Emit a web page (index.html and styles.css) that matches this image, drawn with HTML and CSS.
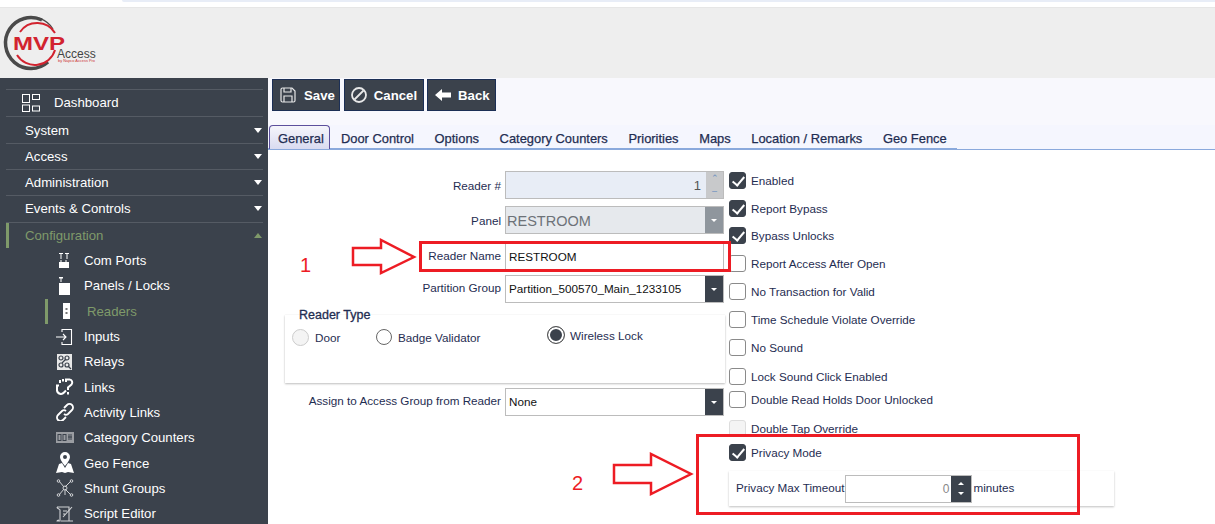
FILE: index.html
```html
<!DOCTYPE html>
<html lang="en">
<head>
<meta charset="utf-8">
<title>MVP Access - Reader</title>
<link rel="stylesheet" href="styles.css">
</head>
<body>
<div class="topbar"><div class="toppill"></div></div>
<header class="brand">
  <svg class="logo" width="100" height="70" viewBox="0 8 100 70">
    <path d="M42 20 A25.500 25.500 0 1 0 48 62" fill="none" stroke="#4a4a4a" stroke-width="3.500"/>
    <path d="M24 18 A26 26 0 0 1 53 29" fill="none" stroke="#4a4a4a" stroke-width="1.300"/>
    <path d="M20 32 A21 21 0 0 1 55 33" fill="none" stroke="#d2232f" stroke-width="2"/>
    <path d="M55 50 A21 21 0 0 1 17 55" fill="none" stroke="#d2232f" stroke-width="2"/>
    <text x="13" y="50" class="logo-mvp" textLength="52" lengthAdjust="spacingAndGlyphs">MVP</text>
    <text x="57" y="58" class="logo-access">Access</text>
    <text x="58" y="62" class="logo-by" textLength="37" lengthAdjust="spacingAndGlyphs">by Napco Access Pro</text>
  </svg>
</header>
<div class="layout">
  <nav class="sidebar">
    <a class="dash">
      <svg class="ico dash-ico" viewBox="0 0 18 18" fill="none" stroke="#fff" stroke-width="1"><rect x=".5" y=".5" width="7" height="8"/><rect x="10.5" y=".5" width="7" height="5"/><rect x=".5" y="11" width="7" height="6.500"/><rect x="10.500" y="12" width="7" height="5"/></svg>
      <span>Dashboard</span>
    </a>
    <a class="sec sec-tall">System<i class="caret"></i></a>
    <a class="sec">Access<i class="caret"></i></a>
    <a class="sec">Administration<i class="caret"></i></a>
    <a class="sec sec-tall sec-lift">Events &amp; Controls<i class="caret"></i></a>
    <a class="sec open">Configuration<i class="caret up"></i></a>
    <ul class="sub">
      <li><svg class="ico" viewBox="0 0 18 18" fill="#fff"><path d="M3 1h4v1H5.500v5h-1V2H3zM9 1h4v1h-1.500v5h-1V2H9z"/><path d="M3 10h1.500V8h1v2h4V8h1v2H13v6H3z"/></svg>Com Ports</li>
      <li><svg class="ico" viewBox="0 0 18 18" fill="#fff"><path d="M3 0h4v1.500H5.500V5h-1V1.500H3z"/><rect x="3" y="6" width="11" height="12"/></svg>Panels / Locks</li>
      <li class="active"><svg class="ico" viewBox="0 0 18 18"><rect x="5" y="1" width="7" height="16" fill="#fff"/><rect x="7.500" y="6" width="2" height="2" fill="#777"/><rect x="7.500" y="10" width="2" height="2" fill="#777"/></svg>Readers</li>
      <li><svg class="ico" viewBox="0 0 18 18" fill="none" stroke="#fff" stroke-width="1.100"><path d="M6 4V1.500h9.500v15H6V14"/><path d="M0 9h10M7 6l3 3-3 3"/></svg>Inputs</li>
      <li><svg class="ico" viewBox="0 0 18 18"><rect x="1" y="1" width="15" height="16" fill="#e8e8e8"/><g fill="none" stroke="#3b424c" stroke-width="1.200"><circle cx="5" cy="5" r="2"/><circle cx="11" cy="5" r="2"/><circle cx="5" cy="12" r="2"/><circle cx="11" cy="12" r="2"/><path d="M6 10l4-4M12 13l3 3"/></g></svg>Relays</li>
      <li><svg class="ico" viewBox="0 0 18 18" fill="none" stroke="#fff" stroke-width="2"><path d="M10 4V1.500h3.500a3 3 0 0 1 2 5L12 9.500V12M12 14v2.500M3 7.500H1v5a4 4 0 0 0 7 2l2-2M4 2v3M7 1v2.500"/></svg>Links</li>
      <li><svg class="ico" viewBox="0 0 18 18" fill="none" stroke="#fff" stroke-width="1.800"><path d="M8 5l3-3a3 3 0 0 1 5 5l-4 4a3 3 0 0 1-4 0"/><path d="M10 8a3 3 0 0 0-4 0l-4 4a3 3 0 0 0 5 5l3-3"/></svg>Activity Links</li>
      <li><svg class="ico" viewBox="0 0 18 18"><rect x="0" y="3" width="18" height="11" fill="#9a9da2"/><g fill="none" stroke="#3b424c" stroke-width="1"><rect x="2" y="5.500" width="3" height="6"/><rect x="7" y="5.500" width="3" height="6"/><path d="M12 8h4M13 5v6M15 5v6"/></g></svg>Category Counters</li>
      <li><svg class="ico ico-geo" viewBox="0 0 18 22" fill="#fff"><path fill-rule="evenodd" d="M9 0a5 5 0 0 1 5 5c0 3-5 9-5 9S4 8 4 5a5 5 0 0 1 5-5zm0 3a2 2 0 1 0 0 4 2 2 0 0 0 0-4z"/><path d="M3 12l3-1 3 5 3-5 3 1 3 9-6-1-3 1-3-1-6 1z"/></svg>Geo Fence</li>
      <li><svg class="ico" viewBox="0 0 18 18" fill="none" stroke="#cfd1d4" stroke-width="1"><path d="M3 2l5 6M15 2l-6 6M3 16l5-6M15 16l-6-6M9 11v5"/><circle cx="9" cy="9" r="2"/><circle cx="2.500" cy="2" r="1.300"/><circle cx="15.500" cy="2" r="1.300"/><circle cx="2.500" cy="16" r="1.300"/><circle cx="15.500" cy="16" r="1.300"/></svg>Shunt Groups</li>
      <li><svg class="ico" viewBox="0 0 18 18" fill="none" stroke="#cfd1d4" stroke-width="1.100"><path d="M1 2h12v14H5M1 2c0 2 3 2 3 3v11H1c0-1 1-1 2-1M13 16h4"/><path d="M7 12l9-10M7 6h4M7 9h2"/></svg>Script Editor</li>
    </ul>
  </nav>
  <main class="main">
    <div class="toolbar">
      <button class="btn btn-save"><svg class="btn-ico" viewBox="0 0 16 16" fill="none" stroke="#e8e8e8" stroke-width="1.200"><path d="M1 2.500A1.500 1.500 0 0 1 2.500 1H12l3 3v9.500a1.500 1.500 0 0 1-1.500 1.500h-11A1.500 1.500 0 0 1 1 13.500z"/><path d="M4 1v4h7V1M4 15V9h8v6"/></svg>Save</button>
      <button class="btn btn-cancel"><svg class="btn-ico" viewBox="0 0 16 16" fill="none" stroke="#e8e8e8" stroke-width="1.800"><circle cx="8" cy="8" r="7"/><path d="M3.500 12.500l9-9"/></svg>Cancel</button>
      <button class="btn btn-back"><svg class="btn-ico btn-ico-back" viewBox="0 0 16 14" fill="#fff"><path d="M0 7l7-6v3.500h9v5H7V13z"/></svg>Back</button>
    </div>
    <div class="tabstrip">
      <div class="tabs">
        <span class="tab current">General</span>
        <span class="tab">Door Control</span>
        <span class="tab">Options</span>
        <span class="tab">Category Counters</span>
        <span class="tab">Priorities</span>
        <span class="tab">Maps</span>
        <span class="tab">Location / Remarks</span>
        <span class="tab">Geo Fence</span>
      </div>
    </div>
    <div class="form">
      <div class="left">
        <div class="row">
          <label>Reader #</label>
          <div class="field disabled num"><span class="val">1</span><span class="spin-off"><b>⌃</b><b>–</b></span></div>
        </div>
        <div class="row gap7">
          <label>Panel</label>
          <div class="field disabled panel-f"><span class="val big">RESTROOM</span><span class="drop grey"><i class="mini-caret"></i></span></div>
        </div>
        <div class="row gap8">
          <label>Reader Name</label>
          <div class="field"><span class="val dark">RESTROOM</span></div>
        </div>
        <div class="row gap5">
          <label>Partition Group</label>
          <div class="field"><span class="val dark val-up">Partition_500570_Main_1233105</span><span class="drop"><i class="mini-caret"></i></span></div>
        </div>
        <section class="rtype">
          <h3>Reader Type</h3>
          <div class="radios">
            <span class="radio r-door"><i class="rd off"></i>Door</span>
            <span class="radio r-badge"><i class="rd"></i>Badge Validator</span>
            <span class="radio r-wire"><i class="rd on"></i>Wireless Lock</span>
          </div>
        </section>
        <div class="row gap5">
          <label>Assign to Access Group from Reader</label>
          <div class="field"><span class="val dark val-up">None</span><span class="drop"><i class="mini-caret"></i></span></div>
        </div>
      </div>
      <div class="right">
        <div class="chk first"><i class="box on"></i>Enabled</div>
        <div class="chk"><i class="box on"></i>Report Bypass</div>
        <div class="chk g9"><i class="box on"></i>Bypass Unlocks</div>
        <div class="chk"><i class="box"></i>Report Access After Open</div>
        <div class="chk"><i class="box"></i>No Transaction for Valid</div>
        <div class="chk"><i class="box"></i>Time Schedule Violate Override</div>
        <div class="chk"><i class="box"></i>No Sound</div>
        <div class="chk g11"><i class="box"></i>Lock Sound Click Enabled</div>
        <div class="chk g5"><i class="box"></i>Double Read Holds Door Unlocked</div>
        <div class="chk g11"><i class="box off"></i>Double Tap Override</div>
        <div class="chk g6"><i class="box on"></i>Privacy Mode</div>
        <div class="timeout">
          <span>Privacy Max Timeout</span>
          <div class="tfield"><span class="tval">0</span><span class="tspin"><i class="mini-caret up"></i><i class="mini-caret"></i></span></div>
          <span>minutes</span>
        </div>
      </div>
    </div>
  </main>
</div>

<div class="redbox rb1"></div>
<div class="redbox rb2"></div>
<span class="num-note n1">1</span>
<span class="num-note n2">2</span>
<svg class="arrow a1" width="66" height="38" viewBox="0 0 66 38" fill="#fff" stroke="#ed1c24" stroke-width="2.500"><path d="M2 10H30V2L63 19 30 35V27H2z"/></svg>
<svg class="arrow a2" width="82" height="44" viewBox="0 0 82 44" fill="#fff" stroke="#ed1c24" stroke-width="2.500"><path d="M2 13H39V2L79 22 39 42V31H2z"/></svg>
</body>
</html>
```
FILE: styles.css
```css
* { box-sizing: border-box; }
html, body { margin: 0; height: 524px; overflow: hidden; background: #fff; }
body { font-family: "Liberation Sans", Arial, sans-serif; font-size: 11.700px; color: #1f2d52; position: relative; }
i { display: block; font-style: normal; }

.topbar { height: 8px; background: #fff; border-bottom: 1px solid #e6e6e6; }
.toppill { margin-left: 122px; height: 2px; background: #e8edf7; border-bottom-left-radius: 6px; }

.brand { height: 70px; background: #eeeeee; }
.logo { display: block; }
.logo-mvp { font: 700 18px "Liberation Sans", sans-serif; fill: #d2232f; }
.logo-access { font: 400 12px "Liberation Sans", sans-serif; fill: #444; }
.logo-by { font: 400 3.500px "Liberation Sans", sans-serif; fill: #c33; }

.layout { display: flex; height: 446px; }

.sidebar { width: 268px; flex: none; background: #3b424c; color: #fff; padding: 11px 5px 0 6px; font-size: 13.200px; overflow: hidden; }
.sidebar a, .sidebar li { display: flex; align-items: center; }
.dash { height: 28px; border-top: 1px solid #555b64; border-bottom: 1px solid #555b64; padding-left: 16px; padding-bottom: 1px; }
.dash span { margin-left: 4px; }
.dash-ico { width: 18px; height: 18px; margin-right: 8px; }
.sec { height: 26px; border-bottom: 1px solid #555b64; padding-left: 19px; position: relative; justify-content: space-between; padding-right: 1px; }
.sec-tall { height: 27px; }
.sec-lift { padding-bottom: 1px; }
.sec.open { border-bottom: 0; height: 25px; color: #7f9a6a; box-shadow: inset 3px 0 0 #7f9a6a; }
.caret { width: 0; height: 0; border-left: 4.500px solid transparent; border-right: 4.500px solid transparent; border-top: 5px solid #fff; }
.caret.up { border-top: 0; border-bottom: 5px solid #7f9a6a; }
.sub { list-style: none; margin: 0; padding: 0; }
.sub li { height: 25.300px; padding-left: 50px; }
.ico { width: 18px; height: 18px; margin-right: 10px; flex: none; }
.ico-geo { height: 22px; }
.sub li.active { color: #7f9a6a; box-shadow: inset 3px 0 0 #7f9a6a; margin-left: 39px; padding-left: 13px; }
.sub li.active .ico { margin-right: 11px; }

.main { flex: 1; min-width: 0; display: flex; flex-direction: column; background: #fff; }
.toolbar { height: 47px; background: #f8f8fd; display: flex; gap: 3px; padding: 1px 0 0 4px; }
.btn { height: 32px; background: #3b424c; border: 1px solid #1c2f55; color: #fff; font: 700 13.200px "Liberation Sans", sans-serif; display: flex; align-items: center; padding: 0 5px 0 7px; gap: 8px; }
.btn-save { margin-right: 1px; padding-right: 4px; }
.btn-cancel { padding: 0 6px; gap: 7px; }
.btn-back { gap: 7px; }
.btn-ico { width: 16px; height: 16px; }
.btn-ico-back { height: 14px; }

.tabstrip { height: 25px; background: #f5f6fe; border-bottom: 1px solid #8aa9dc; }
.tabs { height: 25px; width: 689px; display: flex; padding-left: 1px; border-bottom: 2px solid #8aa9dc; }
.tab { padding: 0 10.300px; line-height: 27px; font-size: 12.900px; color: #1f2d52; white-space: nowrap; -webkit-text-stroke: .25px #1f2d52; }
.tab.current { height: 24px; width: 64px; margin-right: 1px; padding: 0 0 0 8px; line-height: 26px; border: 1px solid #5c4f9c; border-bottom: 0; border-radius: 4px 4px 0 0; background: linear-gradient(#f5f5fb, #d9dbf0); }

.form { flex: 1; display: flex; padding: 21px 0 0 17px; gap: 4px; align-items: flex-start; }
.left { width: 440px; flex: none; }
.row { display: grid; grid-template-columns: 216px 219px; column-gap: 4px; align-items: center; height: 28px; }
.row label { text-align: right; white-space: nowrap; }
.gap7 { margin-top: 7px; }
.gap8 { margin-top: 8px; }
.gap5 { margin-top: 5px; }
.row.gap8 label { padding-bottom: 2px; }
.row.gap5 label { padding-bottom: 4px; }
.field { height: 28px; border: 1px solid #bcbcbc; background: #fff; display: flex; align-items: center; overflow: hidden; }
.val { flex: 1; padding-left: 3px; color: #555; }
.val.dark { color: #111; padding-top: 1px; }
.val.val-up { padding-top: 0; padding-bottom: 2px; }
.val.big { font-size: 14.500px; color: #6d7278; padding: 1px 0 0 1px; }
.disabled { background: #e8edf6; }
.panel-f { background: #e6e9ed; }
.num .val { text-align: right; padding-right: 5px; font-size: 13px; }
.spin-off { width: 17px; height: 100%; background: #c8c9cb; display: flex; flex-direction: column; align-items: center; color: #6b8fc0; font-size: 9px; line-height: 13px; }
.spin-off b { font-weight: 400; display: block; }
.drop { width: 18px; height: 100%; background: #3b424c; display: flex; align-items: center; justify-content: center; }
.drop.grey { background: #8f969d; }
.mini-caret { width: 0; height: 0; border-left: 3px solid transparent; border-right: 3px solid transparent; border-top: 3px solid #fff; }
.mini-caret.up { border-top: 0; border-bottom: 3px solid #fff; }

.rtype { margin-top: 12px; height: 68px; background: #fff; box-shadow: 0 1px 2px rgba(0,0,0,.25), 0 0 1px rgba(0,0,0,.08); padding: 0 0 0 7px; }
.rtype h3 { margin: 0 0 0 7px; font-size: 12.500px; font-weight: 400; -webkit-text-stroke: .3px #1f2d52; line-height: 14px; position: relative; top: -7px; color: #1f2d52; }
.radios { display: flex; align-items: flex-start; }
.radio { display: flex; align-items: center; gap: 6px; white-space: nowrap; }
.r-door { width: 84px; }
.r-badge { width: 171px; }
.r-wire { margin-top: -3px; gap: 5px; }
.rd { width: 16px; height: 16px; border-radius: 50%; border: 1px solid #666; background: #fff; }
.rd.off { width: 17px; height: 17px; border-color: #ccc; background: #f4f4f4; }
.rd.on { width: 18px; height: 18px; border: 1px solid #555; box-shadow: inset 0 0 0 2px #fff; background: #3b424c; }

.right { width: 386px; flex: none; }
.chk { height: 18px; display: flex; align-items: center; gap: 5px; margin-top: 10px; padding-top: 1px; white-space: nowrap; }
.chk.first { margin-top: 0; }
.g9 { margin-top: 9px; }
.g11 { margin-top: 11px; }
.g5 { margin-top: 5px; }
.g6 { margin-top: 6px; }
.box { width: 17px; height: 17px; margin-top: -1px; border: 1px solid #8a8a8a; border-radius: 3px; background: #fff; position: relative; flex: none; }
.box.off { border-color: #ddd; background: #f4f4f4; }
.box.on { background: #3b424c; border-color: #3b424c; }
.box.on::after { content: ""; position: absolute; left: 5px; top: 1px; width: 5px; height: 10px; border: solid #fff; border-width: 0 2.500px 2.500px 0; transform: rotate(40deg); }
.timeout { margin-top: 10px; height: 35px; width: 385px; background: #fff; box-shadow: 0 1px 2px rgba(0,0,0,.25); display: flex; align-items: center; padding-left: 7px; gap: 1px; }
.timeout > span { padding-bottom: 2px; }
.tfield { width: 127px; height: 28px; border: 1px solid #bcbcbc; display: flex; align-items: stretch; justify-content: flex-end; }
.tval { color: #888; font-size: 12px; align-self: center; padding-right: 2px; }
.tspin { width: 20px; background: #3b424c; display: flex; flex-direction: column; justify-content: space-evenly; align-items: center; }

.redbox { position: absolute; border: 3px solid #ed1c24; pointer-events: none; }
.rb1 { left: 419px; top: 241px; width: 312px; height: 31px; }
.rb2 { left: 696px; top: 434px; width: 384px; height: 81px; }
.num-note { position: absolute; color: #ed1c24; font-size: 20px; line-height: 20px; }
.n1 { left: 300px; top: 255px; }
.n2 { left: 572px; top: 473px; }
.arrow { position: absolute; }
.a1 { left: 351px; top: 238px; }
.a2 { left: 612px; top: 452px; }
```
